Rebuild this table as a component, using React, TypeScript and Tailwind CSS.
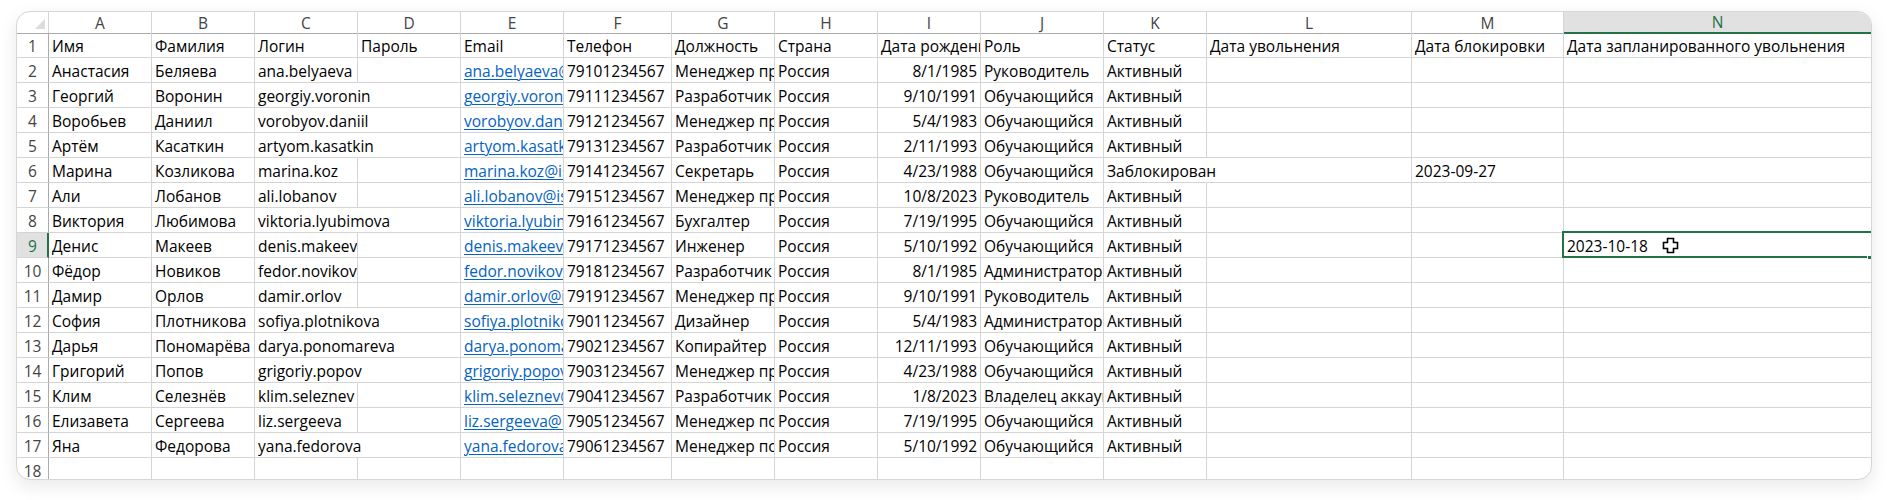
import React from "react";

type Row = string[];

const LETTERS = ["A", "B", "C", "D", "E", "F", "G", "H", "I", "J", "K", "L", "M", "N"];

const HEAD: Row = [
  "Имя", "Фамилия", "Логин", "Пароль", "Email", "Телефон", "Должность", "Страна",
  "Дата рождения", "Роль", "Статус", "Дата увольнения", "Дата блокировки", "Дата запланированного увольнения",
];

const DATA: Row[] = [
  ["Анастасия", "Беляева", "ana.belyaeva", "", "ana.belyaeva@ispring.ru", "79101234567", "Менеджер проектов", "Россия", "8/1/1985", "Руководитель", "Активный", "", "", ""],
  ["Георгий", "Воронин", "georgiy.voronin", "", "georgiy.voronin@ispring.ru", "79111234567", "Разработчик", "Россия", "9/10/1991", "Обучающийся", "Активный", "", "", ""],
  ["Воробьев", "Даниил", "vorobyov.daniil", "", "vorobyov.daniil@ispring.ru", "79121234567", "Менеджер проектов", "Россия", "5/4/1983", "Обучающийся", "Активный", "", "", ""],
  ["Артём", "Касаткин", "artyom.kasatkin", "", "artyom.kasatkin@ispring.ru", "79131234567", "Разработчик", "Россия", "2/11/1993", "Обучающийся", "Активный", "", "", ""],
  ["Марина", "Козликова", "marina.koz", "", "marina.koz@ispring.ru", "79141234567", "Секретарь", "Россия", "4/23/1988", "Обучающийся", "Заблокирован", "", "2023-09-27", ""],
  ["Али", "Лобанов", "ali.lobanov", "", "ali.lobanov@ispring.ru", "79151234567", "Менеджер проектов", "Россия", "10/8/2023", "Руководитель", "Активный", "", "", ""],
  ["Виктория", "Любимова", "viktoria.lyubimova", "", "viktoria.lyubimova@ispring.ru", "79161234567", "Бухгалтер", "Россия", "7/19/1995", "Обучающийся", "Активный", "", "", ""],
  ["Денис", "Макеев", "denis.makeev", "", "denis.makeev@ispring.ru", "79171234567", "Инженер", "Россия", "5/10/1992", "Обучающийся", "Активный", "", "", "2023-10-18"],
  ["Фёдор", "Новиков", "fedor.novikov", "", "fedor.novikov@ispring.ru", "79181234567", "Разработчик", "Россия", "8/1/1985", "Администратор", "Активный", "", "", ""],
  ["Дамир", "Орлов", "damir.orlov", "", "damir.orlov@ispring.ru", "79191234567", "Менеджер проектов", "Россия", "9/10/1991", "Руководитель", "Активный", "", "", ""],
  ["София", "Плотникова", "sofiya.plotnikova", "", "sofiya.plotnikova@ispring.ru", "79011234567", "Дизайнер", "Россия", "5/4/1983", "Администратор", "Активный", "", "", ""],
  ["Дарья", "Пономарёва", "darya.ponomareva", "", "darya.ponomareva@ispring.ru", "79021234567", "Копирайтер", "Россия", "12/11/1993", "Обучающийся", "Активный", "", "", ""],
  ["Григорий", "Попов", "grigoriy.popov", "", "grigoriy.popov@ispring.ru", "79031234567", "Менеджер проектов", "Россия", "4/23/1988", "Обучающийся", "Активный", "", "", ""],
  ["Клим", "Селезнёв", "klim.seleznev", "", "klim.seleznev@ispring.ru", "79041234567", "Разработчик", "Россия", "1/8/2023", "Владелец аккаунта", "Активный", "", "", ""],
  ["Елизавета", "Сергеева", "liz.sergeeva", "", "liz.sergeeva@ispring.ru", "79051234567", "Менеджер по персоналу", "Россия", "7/19/1995", "Обучающийся", "Активный", "", "", ""],
  ["Яна", "Федорова", "yana.fedorova", "", "yana.fedorova@ispring.ru", "79061234567", "Менеджер по персоналу", "Россия", "5/10/1992", "Обучающийся", "Активный", "", "", ""],
];

// cells whose text spills into the empty neighbour (row index in DATA -> column index)
const SPILL: Record<number, number[]> = {
  1: [2],
  2: [2],
  3: [2],
  4: [10],
  6: [2],
  10: [2],
  11: [2],
  12: [2],
  15: [2],
};

const GRID =
  "grid grid-cols-[32px_103px_103px_103px_103px_103px_108px_103px_103px_103px_123px_103px_205px_152px_307px]";

const CELL =
  "relative h-full border-b border-[#d4d4d4] px-[3px] flex items-end whitespace-nowrap leading-[20px] pb-[1px] overflow-hidden";

function Cursor() {
  return (
    <svg width="17" height="17" viewBox="0 0 17 17" className="absolute left-[98px] top-[4px]">
      <path
        d="M5.5 1.5 H11.5 V5.5 H15.5 V11.5 H11.5 V15.5 H5.5 V11.5 H1.5 V5.5 H5.5 Z"
        fill="#ffffff"
        stroke="#000000"
        strokeWidth="1.6"
        strokeLinejoin="miter"
      />
    </svg>
  );
}

function DataRow({ row, idx }: { row: Row; idx: number }) {
  const spills = SPILL[idx] || [];
  const selectedRow = idx === 7;
  const cells: React.ReactNode[] = [];
  for (let c = 0; c < row.length; c++) {
    if (c > 0 && spills.includes(c - 1)) continue;
    const spill = spills.includes(c);
    const isLast = c === row.length - 1;
    const isLink = c === 4 && row[c] !== "";
    const isRight = c === 8;
    const selected = selectedRow && c === 13;
    cells.push(
      <div
        key={c}
        className={[
          CELL,
          spill ? "col-span-2" : "",
          isLast ? "" : "border-r",
          isRight ? "justify-end" : "",
          selected ? "overflow-visible" : "",
        ].join(" ")}
      >
        {isLink ? (
          <span className="text-[#0563c1] underline decoration-[1px] underline-offset-[2px]">{row[c]}</span>
        ) : (
          <span className="text-black">{row[c]}</span>
        )}
        {selected && (
          <>
            <div className="absolute -left-[2px] -top-[2px] -right-[4px] -bottom-[1px] border-2 border-[#217346] pointer-events-none" />
            <div className="absolute -right-[1px] -bottom-[3px] w-[5px] h-[5px] bg-[#217346] border border-white" />
            <Cursor />
          </>
        )}
      </div>
    );
  }
  return (
    <div className={`${GRID} h-[25px]`}>
      <div
        className={
          selectedRow
            ? "h-full border-b border-[#d4d4d4] border-r-2 border-r-[#217346] bg-[#e1e1e1] text-[#217346] flex items-end justify-center leading-[20px] pb-[1px] pl-[1px]"
            : "h-full border-b border-[#d4d4d4] border-r border-r-[#ababab] text-[#444444] flex items-end justify-center leading-[20px] pb-[1px]"
        }
      >
        {idx + 2}
      </div>
      {cells}
    </div>
  );
}

export default function App() {
  return (
    <div className="w-[1887px] h-[500px] bg-white pt-[11px] pl-[16px] font-['Open_Sans',sans-serif] text-[15.5px]">
      <div className="w-[1856px] h-[469px] rounded-[14px] border border-[#d6d6d6] bg-white overflow-hidden shadow-[0_6px_18px_rgba(0,0,0,0.09)]">
        {/* column headers */}
        <div className={`${GRID} h-[21px]`}>
          <div className="h-full border-r border-r-[#d4d4d4] border-b border-b-[#ababab] flex items-end justify-end pr-[3px] pb-[4px]">
            <svg width="10" height="10" viewBox="0 0 10 10">
              <polygon points="10,0 10,10 0,10" fill="#dcdcdc" />
            </svg>
          </div>
          {LETTERS.map((l, i) =>
            i === 13 ? (
              <div
                key={l}
                className="h-full border-b-2 border-b-[#217346] bg-[#e1e1e1] text-[#217346] flex items-end justify-center leading-[20px]"
              >
                {l}
              </div>
            ) : (
              <div
                key={l}
                className="h-full border-r border-r-[#d4d4d4] border-b border-b-[#ababab] text-[#444444] flex items-end justify-center leading-[20px]"
              >
                {l}
              </div>
            )
          )}
        </div>
        {/* header row 1 */}
        <div className={`${GRID} h-[25px]`}>
          <div className="h-full border-b border-[#d4d4d4] border-r border-r-[#ababab] text-[#444444] flex items-end justify-center leading-[20px] pb-[1px]">
            1
          </div>
          {HEAD.map((h, i) => (
            <div key={i} className={`${CELL} ${i === 13 ? "" : "border-r"}`}>
              <span className="text-black">{h}</span>
            </div>
          ))}
        </div>
        {DATA.map((r, i) => (
          <DataRow key={i} row={r} idx={i} />
        ))}
        {/* row 18 */}
        <div className={`${GRID} h-[25px]`}>
          <div className="h-full border-b border-[#d4d4d4] border-r border-r-[#ababab] text-[#444444] flex items-end justify-center leading-[20px] pb-[1px]">
            18
          </div>
          {LETTERS.map((l, i) => (
            <div key={l} className={`${CELL} ${i === 13 ? "" : "border-r"}`} />
          ))}
        </div>
      </div>
    </div>
  );
}
